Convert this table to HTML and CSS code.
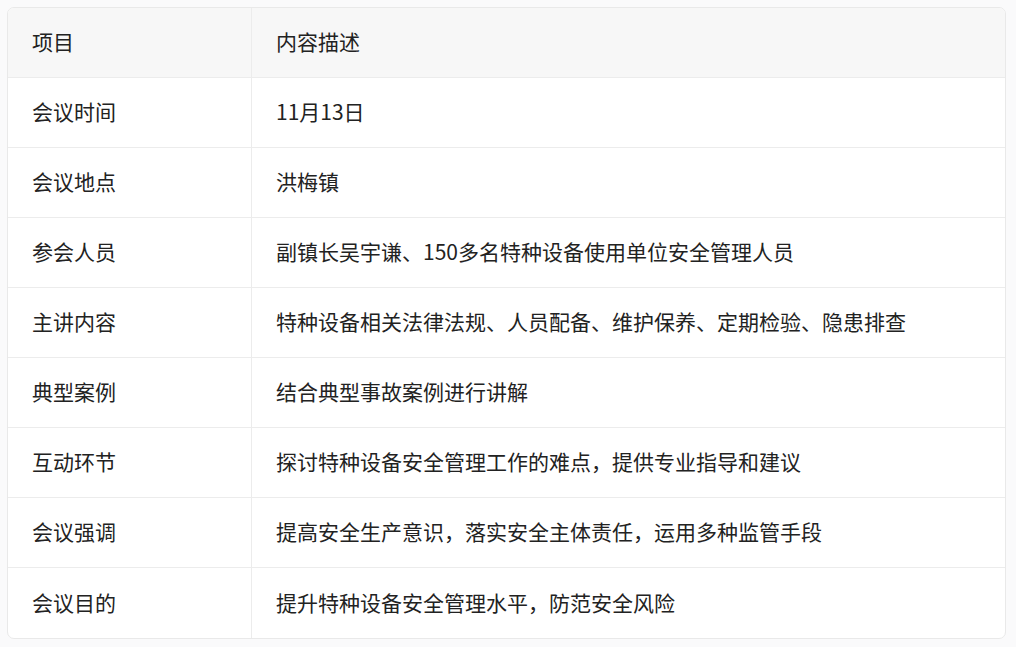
FILE: index.html
```html
<!DOCTYPE html>
<html lang="zh">
<head>
<meta charset="utf-8">
<link rel="stylesheet" href="styles.css">
</head>
<body>
<div class="wrap">
<table class="info">
<thead>
<tr><th class="c1">项目</th><th>内容描述</th></tr>
</thead>
<tbody>
<tr><td class="c1">会议时间</td><td>11月13日</td></tr>
<tr><td class="c1">会议地点</td><td>洪梅镇</td></tr>
<tr><td class="c1">参会人员</td><td>副镇长吴宇谦、150多名特种设备使用单位安全管理人员</td></tr>
<tr><td class="c1">主讲内容</td><td>特种设备相关法律法规、人员配备、维护保养、定期检验、隐患排查</td></tr>
<tr><td class="c1">典型案例</td><td>结合典型事故案例进行讲解</td></tr>
<tr><td class="c1">互动环节</td><td>探讨特种设备安全管理工作的难点，提供专业指导和建议</td></tr>
<tr><td class="c1">会议强调</td><td>提高安全生产意识，落实安全主体责任，运用多种监管手段</td></tr>
<tr><td class="c1">会议目的</td><td>提升特种设备安全管理水平，防范安全风险</td></tr>
</tbody>
</table>
</div>
</body>
</html>
```
FILE: styles.css
```css
html, body {
  margin: 0;
  padding: 0;
  background: #fafafb;
}
.wrap {
  padding: 7px 10px 0 7px;
}
.info {
  width: 999px;
  border-collapse: separate;
  border-spacing: 0;
  border: 1px solid #e9e9e9;
  border-radius: 7px;
  overflow: hidden;
  background: #ffffff;
  font-family: "Noto Sans CJK SC", "Microsoft YaHei", sans-serif;
  font-size: 21px;
  color: #222222;
}
.info th, .info td {
  height: 70px;
  padding: 0 24px 3px 24px;
  text-align: left;
  font-weight: normal;
  vertical-align: middle;
  border-bottom: 1px solid #ececec;
  box-sizing: border-box;
}
.info tbody tr:last-child td {
  border-bottom: none;
}
.info thead th {
  background: #f7f7f7;
}
.info .c1 {
  width: 244px;
  border-right: 1px solid #ececec;
}
```
